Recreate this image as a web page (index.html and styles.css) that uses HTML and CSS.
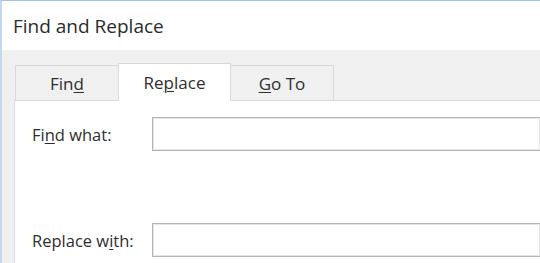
FILE: index.html
```html
<!DOCTYPE html>
<html>

<head>
    <meta charset="utf-8" />
    <title>Find and Replace</title>
    <link rel="stylesheet" href="styles.css">
</head>

<body>
    <!-- 对话框 -->
    <div class="dialog">
        <div class="titlebar">Find and Replace</div>

        <div class="content">
            <!-- 选项卡 -->
            <div class="tabs">
                <div class="tab">Fin<u>d</u></div>
                <div class="tab active">Re<u>p</u>lace</div>
                <div class="tab"><u>G</u>o To</div>
            </div>

            <!-- 选项卡面板 -->
            <div class="panel">
                <div class="field">
                    <label class="label">Fi<u>n</u>d what:</label>
                    <div class="input"></div>
                </div>
                <div class="field">
                    <label class="label">Replace w<u>i</u>th:</label>
                    <div class="input"></div>
                </div>
            </div>
        </div>
    </div>
</body>

</html>
```

FILE: styles.css
```css
* {
    padding: 0;
    margin: 0;
    box-sizing: border-box;
}

body {
    width: 540px;
    height: 263px;
    overflow: hidden;
    background-color: #f0f0f0;
    font-family: "Open Sans", "Noto Sans", sans-serif;
    color: #2e2e2e;
}

u {
    text-decoration-thickness: 1px;
    text-underline-offset: 2px;
}

/* 对话框 */
.dialog {
    height: 263px;
    border-top: 1px solid #9fc2e6;
    border-left: 2px solid #c2d8f0;
    display: flex;
    flex-direction: column;
}

/* 标题栏 */
.titlebar {
    height: 49px;
    background-color: #ffffff;
    padding-left: 11px;
    display: flex;
    align-items: center;
    font-size: 19px;
    color: #2b2b2b;
}

.content {
    flex: 1;
    padding: 13px 0 0 12px;
    display: flex;
    flex-direction: column;
}

/* 选项卡 */
.tabs {
    display: flex;
    align-items: flex-end;
    padding-left: 1px;
    position: relative;
    z-index: 1;
}

.tab {
    width: 104px;
    height: 35px;
    border: 1px solid #d9d9d9;
    border-bottom: 0;
    background-color: #f0f0f0;
    display: flex;
    justify-content: center;
    align-items: center;
    font-size: 17px;
    padding-top: 1px;
}

.tab + .tab {
    margin-left: -1px;
}

.tab.active {
    width: 113px;
    height: 38px;
    margin-bottom: -1px;
    background-color: #ffffff;
    padding-bottom: 1px;
}

/* 面板 */
.panel {
    flex: 1;
    background-color: #ffffff;
    border-top: 1px solid #d9d9d9;
    border-left: 1px solid #d9d9d9;
    padding: 16px 0 0 17px;
    display: flex;
    flex-direction: column;
    gap: 72px;
}

.field {
    display: flex;
    align-items: center;
}

.label {
    width: 120px;
    font-size: 16.5px;
}

.input {
    flex: 1;
    height: 34px;
    border: 1px solid #b4b4b4;
    border-right: 0;
    box-shadow: inset 0 0 0 1px #e6e6e6;
}
```
